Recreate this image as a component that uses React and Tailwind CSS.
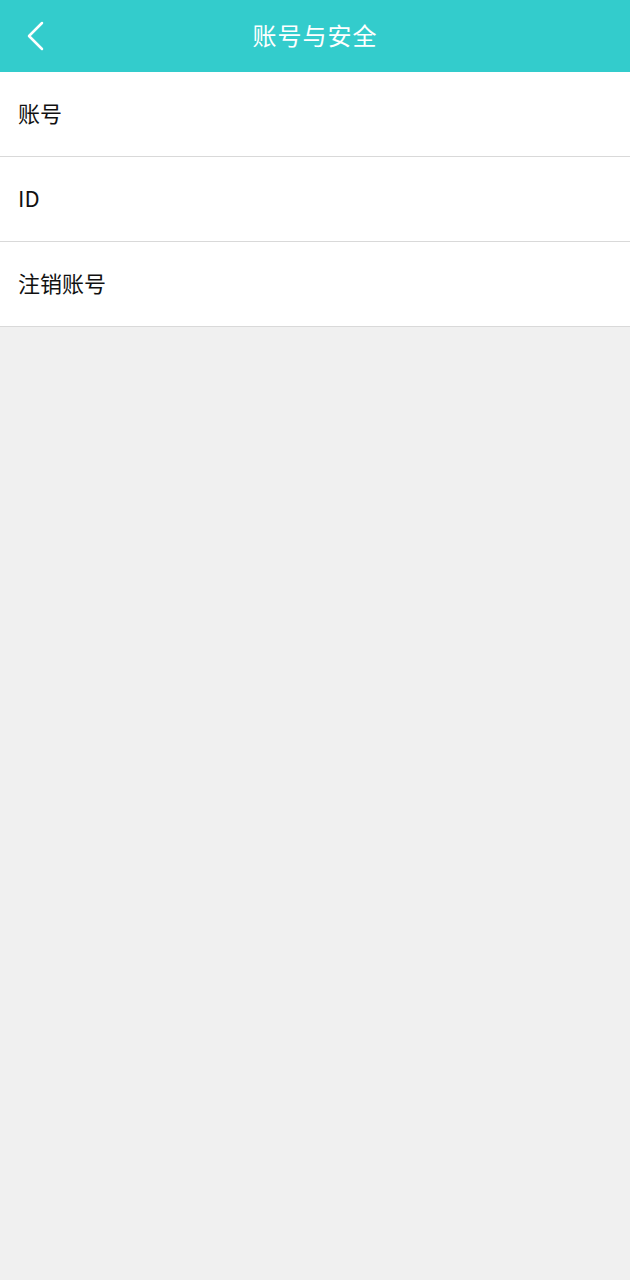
export default function App() {
    const rows = ['账号', 'ID', '注销账号'];

    return (
        <div className="min-h-[1280px] bg-[#f0f0f0]" style={{ fontFamily: '"Noto Sans CJK SC", "Noto Sans", sans-serif' }}>
            {/* Header */}
            <div className="h-[72px] bg-[#33cccc] flex items-center relative">
                <button className="w-[72px] h-[72px] flex items-center justify-center pb-[1px]">
                    <svg width="20" height="30" viewBox="0 0 20 30" className="ml-[-2px]">
                        <path d="M17 2 L4 15 L17 28" fill="none" stroke="white" strokeWidth="2.5" strokeLinecap="round" strokeLinejoin="round" />
                    </svg>
                </button>
                <h1 className="absolute left-1/2 -translate-x-1/2 top-[17px] leading-[36px] text-white text-[24px] tracking-[1px]">账号与安全</h1>
            </div>

            {/* List */}
            <div className="bg-white">
                {rows.map((label) => (
                    <div key={label} className="h-[85px] flex items-center px-[18px] pb-[5px] border-b border-[#d9d9d9] text-[22px] leading-[30px] text-[#111]">
                        {label}
                    </div>
                ))}
            </div>
        </div>
    );
}
